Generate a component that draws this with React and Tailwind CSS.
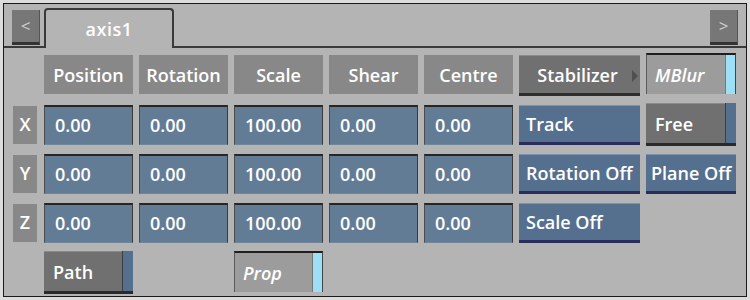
import React from 'react';

const font = { fontFamily: '"Open Sans", "Liberation Sans", Arial, sans-serif' };

const HeaderCell = ({ label }) => (
  <div className="w-[89px] h-[39px] bg-[#888888] flex items-center justify-center pt-[2px] text-white font-semibold text-[18px]">
    {label}
  </div>
);

const Field = ({ value }) => (
  <div className="w-[89px] h-[40px] bg-[#637c96] border-t-2 border-t-[#262626] border-l border-l-[#4b4b4b] border-r border-r-[#3a3a3a] border-b border-b-[#6f869c] flex items-center pl-[10px] text-white font-semibold text-[18px]">
    {value}
  </div>
);

const BlueButton = ({ label, w = 'w-[121px]', pl = 'pl-[8px]' }) => (
  <div className={`${w} h-[40px] bg-[#55708f] border-t border-t-[#7d93ab] border-b-[3px] border-b-[#2a2c5a] flex items-center pt-[2px] ${pl} text-white font-semibold text-[18px] whitespace-nowrap`}>
    {label}
  </div>
);

const GrayToggle = ({ label, w }) => (
  <div className={`${w} h-[43px] flex border-b-[3px] border-b-[#2a2a2a]`}>
    <div className="flex-1 bg-[#707070] border-t border-t-[#8a8a8a] flex items-center pt-[1px] pl-[9px] text-white font-semibold text-[18px]">
      {label}
    </div>
    <div className="w-[11px] bg-[#55708f] border-l border-l-[#3e3e3e]" />
  </div>
);

const LightToggle = ({ label, w }) => (
  <div className={`${w} h-[41px] flex border-t-2 border-t-[#1e1e1e] border-l border-l-[#5a5a5a] border-r border-r-[#444]`}>
    <div className="flex-1 bg-[#9c9c9c] flex items-center pt-[1px] pl-[8px] text-white font-semibold italic text-[18px]">
      {label}
    </div>
    <div className="w-[10px] bg-[#9ddff7] border-l border-l-[#777]" />
  </div>
);

const RowLabel = ({ label }) => (
  <div className="w-[24px] h-[38px] bg-[#888888] flex items-center justify-center text-white font-semibold text-[18px]">
    {label}
  </div>
);

const ArrowButton = ({ children }) => (
  <div className="w-[28px] h-[35px] mb-[1px] bg-[#777777] border-b-[3px] border-b-[#333] border-r border-r-[#555] flex items-center justify-center text-[#d0d0d0] text-[17px]">
    {children}
  </div>
);

export default function App() {
  const rows = [
    { axis: 'X', vals: ['0.00', '0.00', '100.00', '0.00', '0.00'], btn: 'Track', extra: 'free' },
    { axis: 'Y', vals: ['0.00', '0.00', '100.00', '0.00', '0.00'], btn: 'Rotation Off', extra: 'plane' },
    { axis: 'Z', vals: ['0.00', '0.00', '100.00', '0.00', '0.00'], btn: 'Scale Off', extra: null },
  ];

  return (
    <div className="w-[750px] h-[300px] bg-[#dcdcdc] p-[3px]" style={font}>
      <div className="h-full border border-[#1a1a1a] bg-[#b4b4b4] flex flex-col">
        {/* tab bar */}
        <div className="h-[44px] flex items-end border-b-2 border-b-[#3a3a3a] px-[8px]">
          <ArrowButton>&lt;</ArrowButton>
          <div className="ml-[4px] w-[130px] h-[40px] mb-[-2px] bg-[#b4b4b4] border-t-2 border-x-2 border-[#3a3a3a] rounded-t-[4px] flex items-center justify-center text-white font-semibold text-[18px] tracking-[0.5px]">
            axis1
          </div>
          <div className="flex-1" />
          <ArrowButton>&gt;</ArrowButton>
        </div>

        <div className="flex flex-col pl-[9px] pt-[7px] gap-[8px]">
          {/* headers */}
          <div className="flex items-start gap-[6px]">
            <div className="w-[24px] mr-[1px]" />
            <HeaderCell label="Position" />
            <HeaderCell label="Rotation" />
            <HeaderCell label="Scale" />
            <HeaderCell label="Shear" />
            <HeaderCell label="Centre" />
            <div className="w-[121px] h-[41px] bg-[#707070] border-t border-t-[#8a8a8a] border-b-[3px] border-b-[#2e2e2e] flex items-center justify-center pt-[2px] relative text-white font-semibold text-[18px]">
              <span className="mr-[4px]">Stabilizer</span>
              <div className="absolute right-[2px] top-[14px] w-0 h-0 border-y-[6px] border-y-transparent border-l-[6px] border-l-[#4f4f4f]" />
            </div>
            <div className="-mt-[2px]">
              <LightToggle label="MBlur" w="w-[90px]" />
            </div>
          </div>

          {rows.map((r) => (
            <div key={r.axis} className="flex items-center gap-[6px] h-[41px]">
              <div className="mr-[1px]">
                <RowLabel label={r.axis} />
              </div>
              {r.vals.map((v, i) => (
                <Field key={i} value={v} />
              ))}
              <BlueButton label={r.btn} pl="pl-[7px]" />
              {r.extra === 'free' && <GrayToggle label="Free" w="w-[90px]" />}
              {r.extra === 'plane' && <BlueButton label="Plane Off" w="w-[90px]" pl="pl-[5px]" />}
            </div>
          ))}

          {/* bottom row */}
          <div className="flex items-start gap-[6px]">
            <div className="w-[24px] mr-[1px]" />
            <GrayToggle label="Path" w="w-[89px]" />
            <div className="w-[89px]" />
            <LightToggle label="Prop" w="w-[89px]" />
          </div>
        </div>
      </div>
    </div>
  );
}
